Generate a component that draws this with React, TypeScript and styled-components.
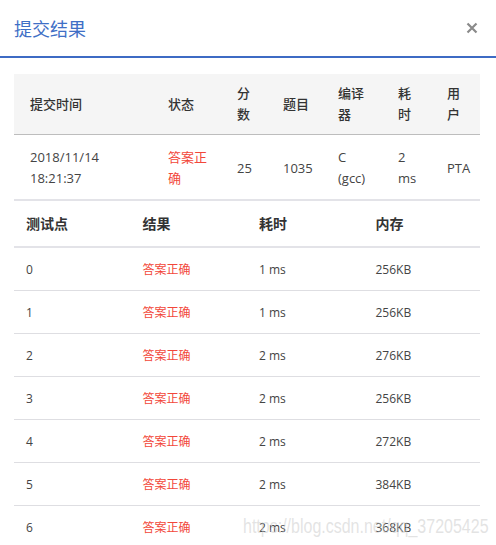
import React from 'react';
import { styled, createGlobalStyle } from 'styled-components';

const GlobalStyle = createGlobalStyle`
  html, body {
    margin: 0;
    padding: 0;
    background: #fff;
  }
  body {
    font-family: "Open Sans", "Noto Sans CJK SC", sans-serif;
    color: #333;
  }
`;

interface Submission {
  time: string;
  status: string;
  score: number;
  problem: string;
  compiler: string;
  cost: string;
  user: string;
}

interface TestCase {
  id: number;
  result: string;
  time: string;
  memory: string;
}

const submission: Submission = {
  time: '2018/11/14 18:21:37',
  status: '答案正确',
  score: 25,
  problem: '1035',
  compiler: 'C (gcc)',
  cost: '2 ms',
  user: 'PTA',
};

const cases: TestCase[] = [
  { id: 0, result: '答案正确', time: '1 ms', memory: '256KB' },
  { id: 1, result: '答案正确', time: '1 ms', memory: '256KB' },
  { id: 2, result: '答案正确', time: '2 ms', memory: '276KB' },
  { id: 3, result: '答案正确', time: '2 ms', memory: '256KB' },
  { id: 4, result: '答案正确', time: '2 ms', memory: '272KB' },
  { id: 5, result: '答案正确', time: '2 ms', memory: '384KB' },
  { id: 6, result: '答案正确', time: '2 ms', memory: '368KB' },
];

// upper table column widths, they make the headers wrap like the original
const summaryCols = [138, 69, 46, 55, 60, 49, 49];

export default function App() {
  return (
    <>
      <GlobalStyle />
      <Modal>
        <Header>
          <Title>提交结果</Title>
          <CloseButton aria-label="close">
            <svg width="12" height="12" viewBox="0 0 12 12">
              <path d="M1.5 1.5 L10.5 10.5 M10.5 1.5 L1.5 10.5" stroke="#8a8a8a" strokeWidth="2.2" />
            </svg>
          </CloseButton>
        </Header>
        <Body>
          <SummaryTable>
            <colgroup>
              {summaryCols.map((w, i) => (
                <col key={i} style={{ width: w }} />
              ))}
            </colgroup>
            <thead>
              <tr>
                <SummaryHead>提交时间</SummaryHead>
                <SummaryHead>状态</SummaryHead>
                <SummaryHead>分数</SummaryHead>
                <SummaryHead>题目</SummaryHead>
                <SummaryHead>编译器</SummaryHead>
                <SummaryHead>耗时</SummaryHead>
                <SummaryHead>用户</SummaryHead>
              </tr>
            </thead>
            <tbody>
              <tr>
                <SummaryCell>{submission.time}</SummaryCell>
                <SummaryCell $accepted>{submission.status}</SummaryCell>
                <SummaryCell>{submission.score}</SummaryCell>
                <SummaryCell>{submission.problem}</SummaryCell>
                <SummaryCell>{submission.compiler}</SummaryCell>
                <SummaryCell>{submission.cost}</SummaryCell>
                <SummaryCell $nowrap>{submission.user}</SummaryCell>
              </tr>
            </tbody>
          </SummaryTable>

          <CaseTable>
            <thead>
              <tr>
                <CaseHead>测试点</CaseHead>
                <CaseHead>结果</CaseHead>
                <CaseHead>耗时</CaseHead>
                <CaseHead>内存</CaseHead>
              </tr>
            </thead>
            <tbody>
              {cases.map((c) => (
                <tr key={c.id}>
                  <CaseCell>{c.id}</CaseCell>
                  <CaseCell $accepted>{c.result}</CaseCell>
                  <CaseCell>{c.time}</CaseCell>
                  <CaseCell>{c.memory}</CaseCell>
                </tr>
              ))}
            </tbody>
          </CaseTable>
        </Body>
        <Watermark>https://blog.csdn.net/qq_37205425</Watermark>
      </Modal>
    </>
  );
}

const Modal = styled.div`
  position: relative;
  width: 496px;
  height: 545px;
  overflow: hidden;
  background: #fff;
`;

const Header = styled.header`
  display: flex;
  align-items: center;
  justify-content: space-between;
  height: 56px;
  padding: 0 18px 0 14px;
  border-bottom: 2px solid #3d6bc4;
`;

const Title = styled.h1`
  margin: 0;
  font-size: 18px;
  font-weight: 400;
  color: #3f6fc6;
`;

const CloseButton = styled.button`
  display: flex;
  align-items: center;
  justify-content: center;
  padding: 0;
  border: none;
  background: none;
  cursor: pointer;
`;

const Body = styled.section`
  padding: 16px 16px 0 14px;
`;

const SummaryTable = styled.table`
  width: 466px;
  table-layout: fixed;
  border-collapse: collapse;
  font-size: 13px;
`;

const SummaryHead = styled.th`
  background: #f5f5f5;
  padding: 9px 8px 9px 16px;
  line-height: 21px;
  text-align: left;
  font-weight: 500;
  color: #333;
  border-bottom: 1px solid #bdbdbd;
  word-break: break-all;
`;

const SummaryCell = styled.td<{ $accepted?: boolean; $nowrap?: boolean }>`
  padding: 12px 8px 10px 16px;
  line-height: 21px;
  color: ${(p) => (p.$accepted ? '#f2473a' : '#444')};
  white-space: ${(p) => (p.$nowrap ? 'nowrap' : 'normal')};
  border-bottom: 2px solid #e3e3e8;
  word-break: ${(p) => (p.$accepted ? 'break-all' : 'normal')};
`;

const CaseTable = styled.table`
  width: 466px;
  table-layout: fixed;
  border-collapse: collapse;
`;

const CaseHead = styled.th`
  padding: 12px 8px 12px 12px;
  line-height: 21px;
  text-align: left;
  font-size: 14px;
  font-weight: 700;
  color: #333;
  border-bottom: 2px solid #e3e3e8;
`;

const CaseCell = styled.td<{ $accepted?: boolean }>`
  padding: 11px 8px 10px 12px;
  line-height: 21px;
  font-size: 12px;
  color: ${(p) => (p.$accepted ? '#f2473a' : '#444')};
  border-bottom: 1px solid #dedee2;
`;

const Watermark = styled.div`
  position: absolute;
  left: 243px;
  top: 514px;
  font-family: "Liberation Sans", Arial, sans-serif;
  font-size: 16px;
  line-height: 20px;
  color: rgba(200, 200, 200, 0.5);
  transform: scaleY(1.25);
  transform-origin: left top;
  white-space: nowrap;
  pointer-events: none;
`;
